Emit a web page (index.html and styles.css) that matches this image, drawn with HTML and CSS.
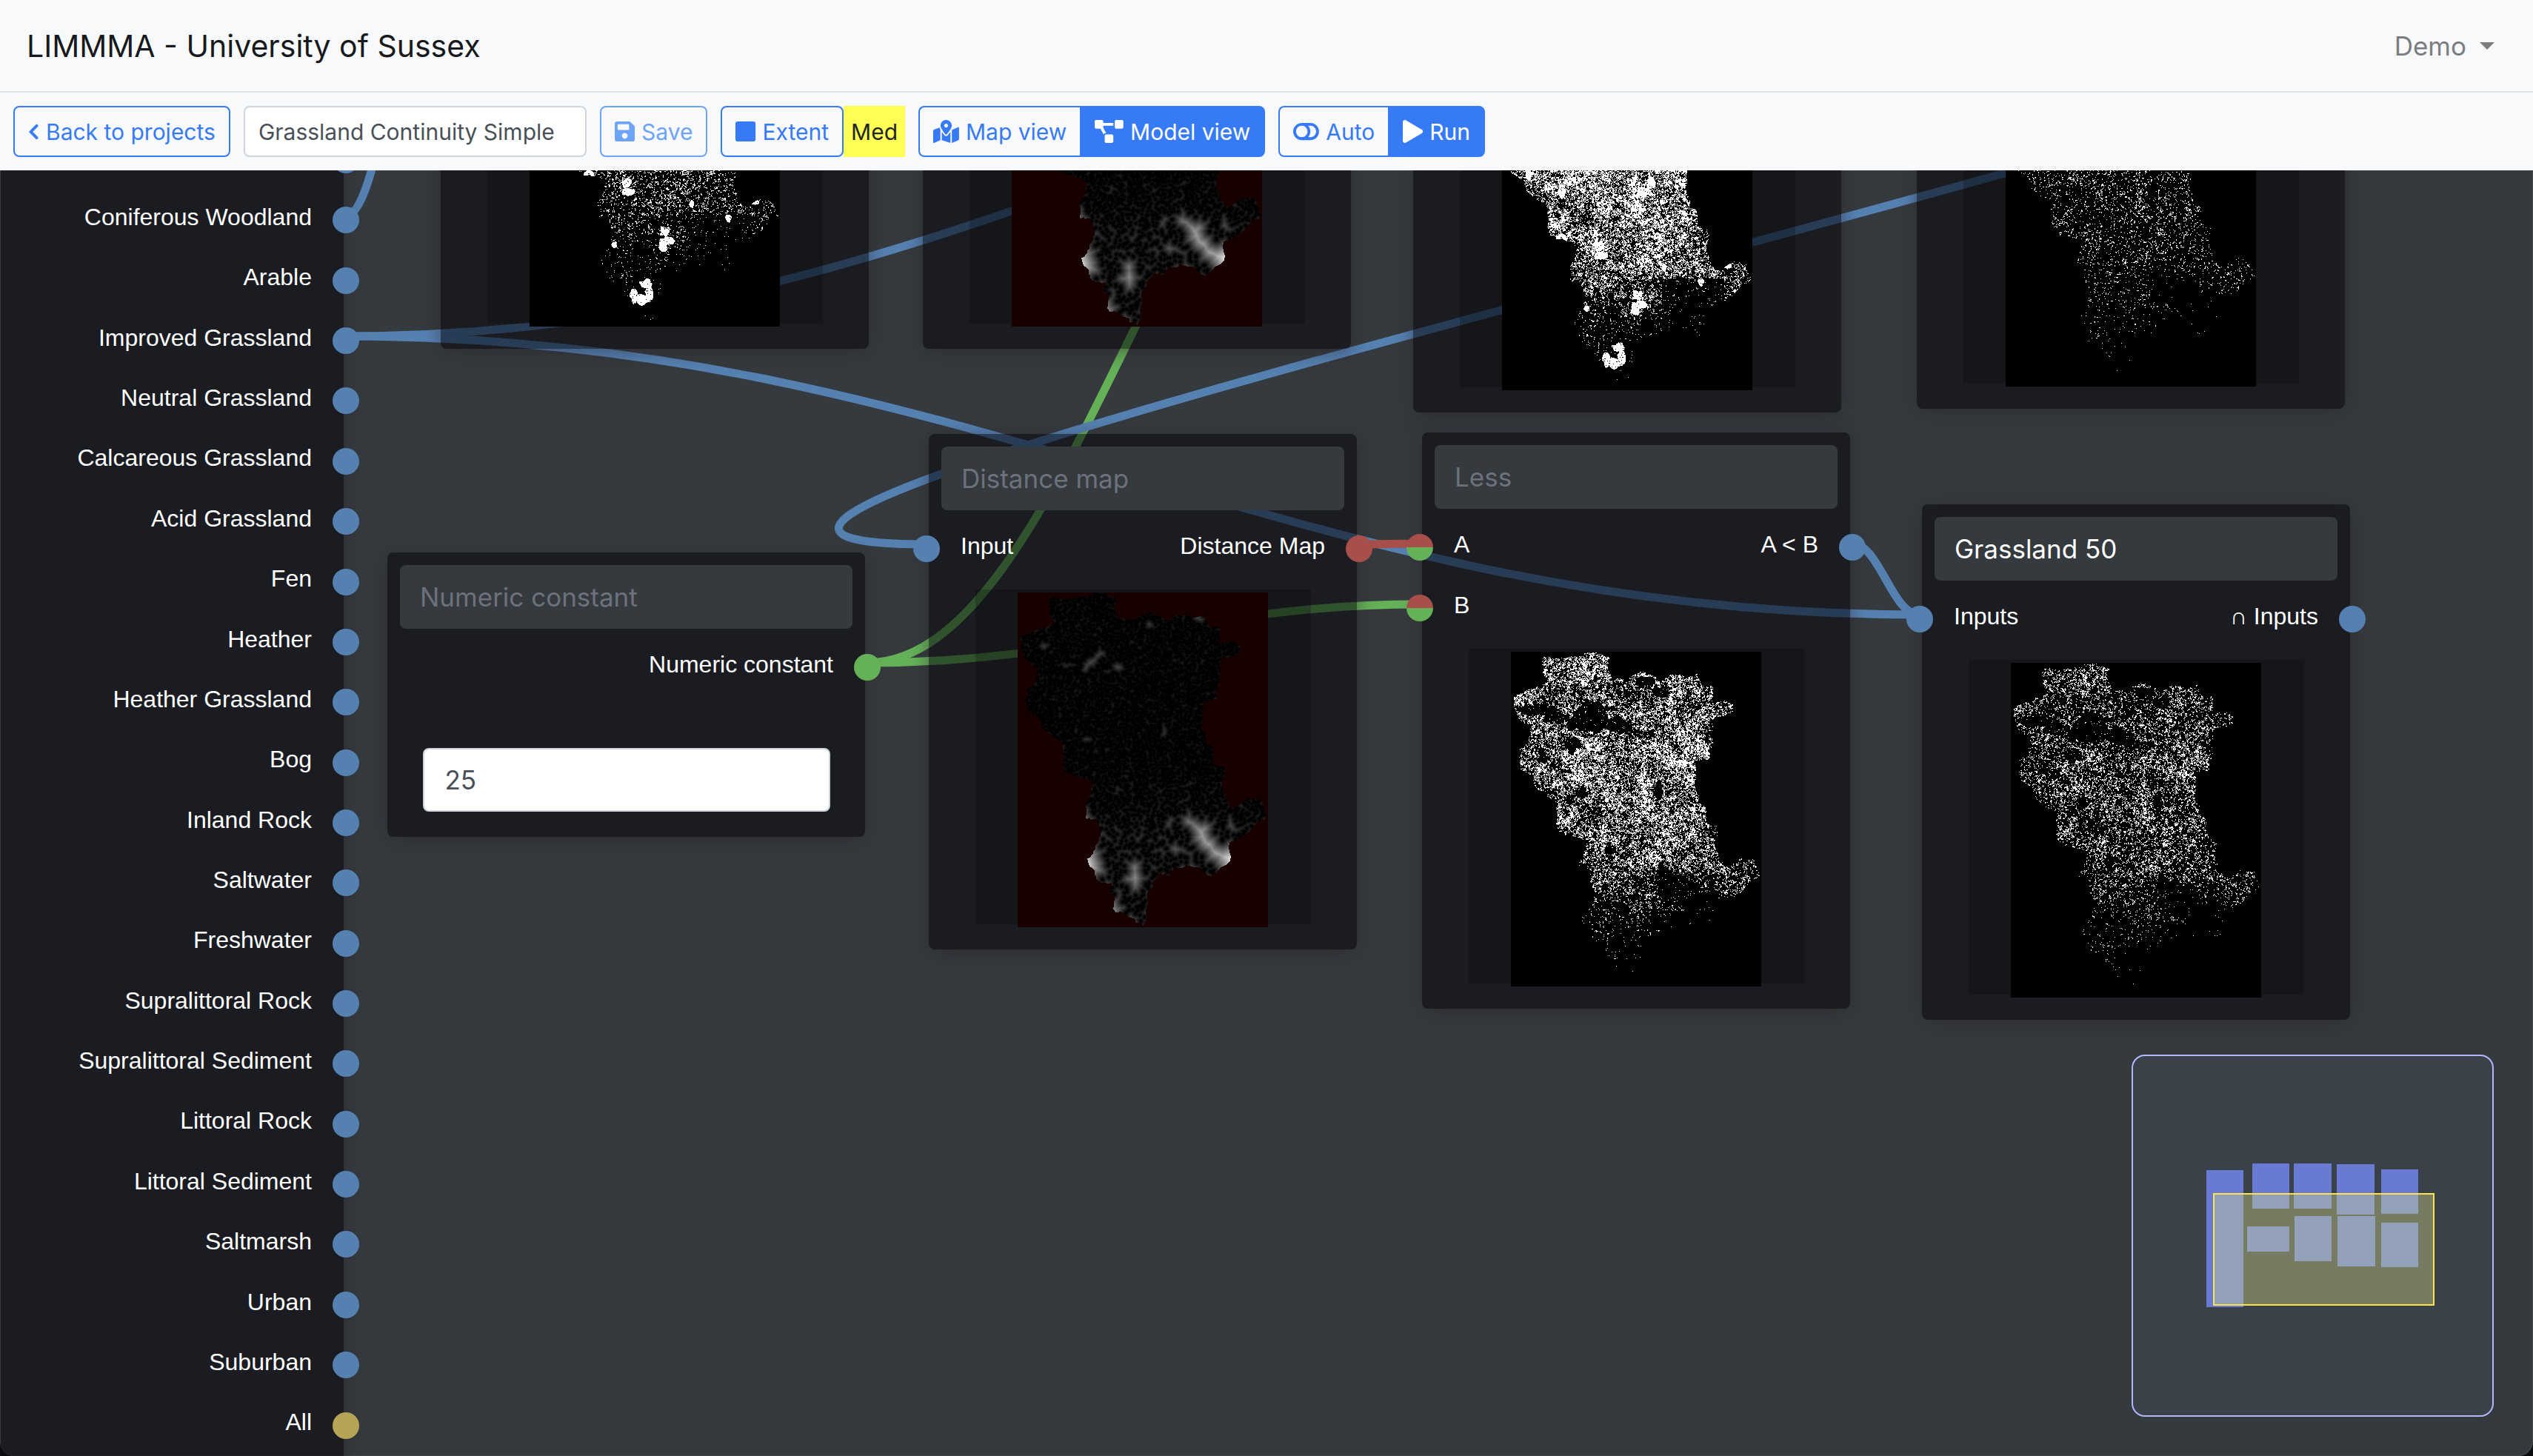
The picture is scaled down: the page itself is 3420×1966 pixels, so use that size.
FILE: index.html
```
<!DOCTYPE html>
<html lang="en">
<head>
<meta charset="utf-8">
<title>LIMMMA - University of Sussex</title>
<link rel="stylesheet" href="styles.css">
</head>
<body>
<header class="navbar">
  <a class="brand" href="#">LIMMMA - University of Sussex</a>
  <button class="user-menu" type="button">Demo <span class="caret"></span></button>
</header>

<div class="toolbar">
  <a class="btn" href="#"><svg class="icon icon-chevron" viewBox="0 0 320 512"><path d="M34.5 239L228.900 44.700c9.400-9.400 24.600-9.400 33.900 0l22.700 22.700c9.400 9.400 9.400 24.500 0 33.900L131.500 256l154 154.800c9.300 9.400 9.300 24.500 0 33.900l-22.700 22.700c-9.400 9.400-24.600 9.400-33.900 0L34.500 273c-9.400-9.400-9.400-24.600 0-34z"/></svg>Back to projects</a>
  <input class="project-name" type="text" aria-label="Project name" value="Grassland Continuity Simple">
  <button class="btn" type="button" disabled><svg class="icon icon-save" viewBox="0 0 448 512"><path d="M433.900 129.900l-83.900-83.900A48 48 0 0 0 316.100 32H48C21.500 32 0 53.500 0 80v352c0 26.500 21.500 48 48 48h352c26.500 0 48-21.500 48-48V163.900a48 48 0 0 0-14.100-34zM224 416c-35.300 0-64-28.700-64-64s28.700-64 64-64 64 28.700 64 64-28.700 64-64 64zm96-304.500V212c0 6.600-5.400 12-12 12H76c-6.600 0-12-5.400-12-12V108c0-6.600 5.400-12 12-12h228.500c3.200 0 6.200 1.300 8.500 3.500l3.500 3.500A12 12 0 0 1 320 111.500z"/></svg>Save</button>
  <div class="group">
    <button class="btn" type="button"><svg class="icon icon-square" viewBox="0 0 448 512"><path d="M400 32H48C21.500 32 0 53.500 0 80v352c0 26.500 21.500 48 48 48h352c26.500 0 48-21.500 48-48V80c0-26.500-21.500-48-48-48z"/></svg>Extent</button>
    <span class="extent-size">Med</span>
  </div>
  <div class="group">
    <button class="btn" type="button"><svg class="icon icon-map" viewBox="0 0 576 512"><path d="M288 0c-69.600 0-126 56.400-126 126 0 56.300 82.400 158.800 113.900 196 6.400 7.500 17.800 7.500 24.200 0C331.600 284.800 414 182.300 414 126 414 56.400 357.600 0 288 0zm0 168c-23.200 0-42-18.800-42-42s18.800-42 42-42 42 18.800 42 42-18.800 42-42 42zM20.100 216A32 32 0 0 0 0 245.700V496c0 11.300 11.400 19 21.900 14.900L160 448V214.900c-8.800-16-16.100-31.500-21.300-46.400L20.100 216zM288 359.700c-14.100 0-27.400-6.200-36.500-17-19.700-23.200-40.600-49.600-59.500-76.700v182l192 64V266c-18.900 27.100-39.800 53.500-59.500 76.700-9.100 10.800-22.500 17-36.500 17zm266.100-198.600L416 224v288l139.900-56A32 32 0 0 0 576 426.300V176c0-11.300-11.400-19-21.900-14.900z"/></svg>Map view</button>
    <button class="btn btn-solid" type="button"><svg class="icon icon-diagram" viewBox="0 0 640 512"><path d="M384 320H256c-17.700 0-32 14.300-32 32v128c0 17.700 14.300 32 32 32h128c17.700 0 32-14.300 32-32V352c0-17.700-14.300-32-32-32zM192 32c0-17.700-14.300-32-32-32H32C14.300 0 0 14.300 0 32v128c0 17.700 14.300 32 32 32h95.700l73.200 128C212 301 232.400 288 256 288h.3L192 175.500V128h224V64H192V32zM608 0H480c-17.700 0-32 14.300-32 32v128c0 17.700 14.300 32 32 32h128c17.700 0 32-14.300 32-32V32c0-17.700-14.300-32-32-32z"/></svg>Model view</button>
  </div>
  <div class="group">
    <button class="btn" type="button"><svg class="icon icon-toggle" viewBox="0 0 576 512"><path d="M384 64H192C86 64 0 150 0 256s86 192 192 192h192c106 0 192-86 192-192S490 64 384 64zM64 256c0-70.700 57.200-128 128-128 70.700 0 128 57.200 128 128 0 70.700-57.200 128-128 128-70.700 0-128-57.200-128-128zm320 128h-48.900c65.200-72.900 65-183.200 0-256H384c70.700 0 128 57.200 128 128 0 70.700-57.200 128-128 128z"/></svg>Auto</button>
    <button class="btn btn-solid" type="button"><svg class="icon icon-play" viewBox="0 0 448 512"><path d="M424.400 214.700L72.400 6.600C43.800-10.300 0 6.100 0 47.900V464c0 37.500 40.700 60.100 72.400 41.300l352-208c31.400-18.500 31.500-64.100 0-82.600z"/></svg>Run</button>
  </div>
</div>

<main class="editor">
  <svg class="links" aria-hidden="true">
    <path class="link-raster" d="M467 61C517 61 542 -308 592 -308"/>
    <path class="link-raster" d="M467 224C1314 224 1738 -226 2585 -226"/>
    <path class="link-number" d="M1171 665C1455 665 1605 -238 1905 -238"/>
    <path class="link-number" d="M1171 665C1469 665 1619 586 1917 586"/>
    <path class="link-raster" d="M467 224C1317 224 1741 600 2591 600"/>
    <path class="link-distance" d="M1834 505C1867 505 1884 504 1917 504"/>
    <path class="link-raster" d="M3168 -226C3965 -226 454 505 1251 505"/>
    <path class="link-raster" d="M2501 504C2537 504 2555 600 2591 600"/>
  </svg>

  <section class="node habitats">
    <ul class="habitat-list">
      <li class="io"><i class="port port-out"></i></li>
      <li class="io">Coniferous Woodland<i class="port port-out"></i></li>
      <li class="io">Arable<i class="port port-out"></i></li>
      <li class="io">Improved Grassland<i class="port port-out"></i></li>
      <li class="io">Neutral Grassland<i class="port port-out"></i></li>
      <li class="io">Calcareous Grassland<i class="port port-out"></i></li>
      <li class="io">Acid Grassland<i class="port port-out"></i></li>
      <li class="io">Fen<i class="port port-out"></i></li>
      <li class="io">Heather<i class="port port-out"></i></li>
      <li class="io">Heather Grassland<i class="port port-out"></i></li>
      <li class="io">Bog<i class="port port-out"></i></li>
      <li class="io">Inland Rock<i class="port port-out"></i></li>
      <li class="io">Saltwater<i class="port port-out"></i></li>
      <li class="io">Freshwater<i class="port port-out"></i></li>
      <li class="io">Supralittoral Rock<i class="port port-out"></i></li>
      <li class="io">Supralittoral Sediment<i class="port port-out"></i></li>
      <li class="io">Littoral Rock<i class="port port-out"></i></li>
      <li class="io">Littoral Sediment<i class="port port-out"></i></li>
      <li class="io">Saltmarsh<i class="port port-out"></i></li>
      <li class="io">Urban<i class="port port-out"></i></li>
      <li class="io">Suburban<i class="port port-out"></i></li>
      <li class="io">All<i class="port port-out port-all"></i></li>
    </ul>
  </section>

  <section class="node node-top node-a">
    <div class="preview"><canvas data-map="patches" width="338" height="452"></canvas></div>
  </section>
  <section class="node node-top node-b">
    <div class="preview"><canvas data-map="distance" width="338" height="452"></canvas></div>
  </section>
  <section class="node node-top node-c">
    <div class="preview"><canvas data-map="dense" width="338" height="452"></canvas></div>
  </section>
  <section class="node node-top node-d">
    <div class="preview"><canvas data-map="faint" width="338" height="452"></canvas></div>
  </section>

  <section class="node node-numeric">
    <input class="node-title" type="text" aria-label="Node name" placeholder="Numeric constant">
    <div class="io">Numeric constant<i class="port port-out port-number"></i></div>
    <input class="node-value" type="text" aria-label="Value" value="25">
  </section>

  <section class="node node-distance">
    <input class="node-title" type="text" aria-label="Node name" placeholder="Distance map">
    <div class="io"><span class="io-in">Input</span>Distance Map<i class="port port-in"></i><i class="port port-out port-distance"></i></div>
    <div class="preview"><canvas data-map="distance" width="338" height="452"></canvas></div>
  </section>

  <section class="node node-less">
    <input class="node-title" type="text" aria-label="Node name" placeholder="Less">
    <div class="io"><span class="io-in">A</span>A &lt; B<i class="port port-in port-mixed"></i><i class="port port-out"></i></div>
    <div class="io"><span class="io-in">B</span><i class="port port-in port-mixed"></i></div>
    <div class="preview"><canvas data-map="medium" width="338" height="452"></canvas></div>
  </section>

  <section class="node node-grassland">
    <input class="node-title" type="text" aria-label="Node name" value="Grassland 50">
    <div class="io"><span class="io-in">Inputs</span>∩ Inputs<i class="port port-in"></i><i class="port port-out"></i></div>
    <div class="preview"><canvas data-map="light" width="338" height="452"></canvas></div>
  </section>

  <svg class="minimap" viewBox="0 0 489 489" role="img" aria-label="Minimap">
    <rect class="mini-frame" x="1" y="1" width="487" height="487" rx="17"/>
    <g class="mini-nodes">
      <rect x="101" y="156" width="50" height="185"/>
      <rect x="163" y="147" width="50" height="61"/>
      <rect x="219" y="147" width="51" height="61"/>
      <rect x="277" y="148" width="51" height="68"/>
      <rect x="337" y="155" width="50" height="60"/>
      <rect x="156" y="232" width="57" height="34"/>
      <rect x="220" y="218" width="50" height="61"/>
      <rect x="278" y="218" width="51" height="68"/>
      <rect x="337" y="227" width="50" height="60"/>
    </g>
    <rect class="mini-view" x="111" y="188" width="297" height="150"/>
  </svg>
</main>
<script src="maps.js"></script>
</body>
</html>
```
FILE: styles.css
```
* {
  box-sizing: border-box;
}

body {
  margin: 0;
  min-height: 100vh;
  display: flex;
  flex-direction: column;
  background: #0c0d0f;
  font-family: Inter, "Liberation Sans", sans-serif;
  font-size: 30px;
  color: #212529;
}

button,
input {
  font: inherit;
  margin: 0;
}

/* Top bar */

.navbar {
  display: flex;
  justify-content: space-between;
  align-items: center;
  height: 125px;
  padding: 0 52px 0 36px;
  background: #f8f9fb;
  border-bottom: 2px solid #dfe2e8;
}

.brand {
  color: #17191c;
  font-size: 41px;
  text-decoration: none;
}

.user-menu {
  display: flex;
  align-items: center;
  gap: 18px;
  padding: 0;
  border: 0;
  background: none;
  color: #7c7d7e;
  font-size: 35px;
}

.caret {
  border: 10px solid transparent;
  border-top-color: currentColor;
  border-bottom: 0;
}

.toolbar {
  display: flex;
  gap: 18px;
  height: 105px;
  padding: 18px;
  background: #f8f9fb;
}

.group {
  display: flex;
}

.btn {
  display: flex;
  align-items: center;
  gap: 9px;
  height: 69px;
  padding: 0 18px;
  border: 2px solid #377af6;
  border-radius: 8px;
  background: none;
  color: #377af6;
  text-decoration: none;
  white-space: nowrap;
}

.btn:disabled {
  color: #6ea4f8;
  border-color: #6ea4f8;
}

.btn-solid {
  background: #377af6;
  color: #fff;
  border-radius: 0 8px 8px 0;
}

.btn:has(+ .btn-solid) {
  border-right: 0;
  border-radius: 8px 0 0 8px;
}

.icon {
  height: 31px;
  fill: currentColor;
}

.icon-chevron {
  height: 24px;
}

.project-name {
  width: 463px;
  height: 69px;
  padding: 0 18px;
  border: 2px solid #ced4da;
  border-radius: 8px;
  background: #fff;
  color: #495057;
}

.extent-size {
  display: flex;
  align-items: center;
  height: 69px;
  padding: 0 10px;
  background: #ffff54;
}

/* Node editor */

.editor {
  position: relative;
  flex: 1;
  overflow: hidden;
  background: #353a3e;
  border-radius: 0 0 20px 20px;
  box-shadow: inset 0 0 0 1px #43484b;
  font-family: "Liberation Sans", Arial, sans-serif;
  font-size: 32px;
  color: #fff;
}

.links {
  position: absolute;
  inset: 0;
  width: 100%;
  height: 100%;
}

.links path {
  fill: none;
  stroke-width: 11px;
}

.link-raster {
  stroke: #5581b1;
}

.link-number {
  stroke: #65b158;
}

.link-distance {
  stroke: #a84f4a;
}

.node {
  position: absolute;
  width: 578px;
  padding: 17px 17px 34px;
  border-radius: 8px;
  background: rgba(6, 4, 10, 0.55);
  box-shadow: 0 4px 24px rgba(40, 32, 42, 0.5);
}

.node-title {
  display: block;
  width: 100%;
  height: 86px;
  margin-bottom: 9px;
  padding: 0 27px;
  border: 0;
  border-radius: 8px;
  background: #353a3e;
  color: #fff;
  font-family: Inter, "Liberation Sans", sans-serif;
  font-size: 35px;
}

.node-title::placeholder {
  color: #6c717b;
  opacity: 1;
}

.io {
  position: relative;
  display: flex;
  align-items: center;
  justify-content: flex-end;
  height: 82px;
  margin: 0 -17px;
  padding: 0 43px 3px;
}

.io-in {
  margin-right: auto;
}

.port {
  position: absolute;
  top: 25px;
  width: 36px;
  height: 36px;
  border-radius: 50%;
  background: #5581b1;
}

.port-in {
  left: -21px;
}

.port-out {
  right: -21px;
}

.port-all {
  background: #b5a455;
}

.port-number {
  background: #65b158;
}

.port-distance {
  background: #a84f4a;
}

.port-mixed {
  background: linear-gradient(#a84f4a 50%, #65b158 50%);
}

.preview {
  width: 453px;
  height: 452px;
  margin: 16px auto 0;
  background: rgba(0, 0, 0, 0.2);
}

.preview canvas {
  position: relative;
  top: 4px;
  display: block;
  margin: 0 auto;
}

.node-value {
  display: block;
  width: 550px;
  height: 86px;
  margin: 70px auto 0;
  padding: 0 28px;
  border: 2px solid #ced4da;
  border-radius: 8px;
  background: #fff;
  color: #495057;
  font-family: Inter, "Liberation Sans", sans-serif;
  font-size: 35px;
}

.habitats {
  left: 1px;
  top: -57px;
  width: 463px;
  height: 1840px;
  padding: 0 17px;
}

.habitat-list {
  display: flex;
  flex-direction: column;
  height: 1790px;
  margin: 0;
  padding: 0;
  list-style: none;
}

.habitats .io {
  flex: 1;
}

.node-top {
  padding-top: 0;
}

.node-a {
  left: 595px;
  top: -261px;
}

.node-b {
  left: 1246px;
  top: -261px;
}

.node-c {
  left: 1908px;
  top: -175px;
}

.node-d {
  left: 2588px;
  top: -180px;
}

.node-numeric {
  left: 523px;
  top: 516px;
  width: 645px;
}

.node-distance {
  left: 1254px;
  top: 356px;
}

.node-less {
  left: 1920px;
  top: 354px;
}

.node-grassland {
  left: 2595px;
  top: 451px;
}

.minimap {
  position: absolute;
  right: 53px;
  bottom: 53px;
  width: 489px;
  height: 489px;
}

.mini-frame {
  fill: #3a4149;
  stroke: #b0b7fb;
  stroke-width: 2px;
}

.mini-nodes {
  fill: #687ad2;
}

.mini-view {
  fill: rgba(232, 236, 142, 0.35);
  stroke: #ffe44e;
  stroke-width: 2px;
}
```
FILE: maps.js
```
// Draws the raster previews: habitat cells inside the study area, and the
// distance of every cell to its nearest habitat.
const W = 338, H = 452;

const AREA = [43,8,74,9,113,0,134,8,131,24,139,35,160,35,182,27,204,37,219,31,234,33,252,29,256,43,273,49,
  271,69,286,66,300,71,299,82,275,88,273,123,266,132,269,143,252,147,250,170,253,203,262,208,263,231,279,236,
  276,260,284,283,290,290,312,278,329,281,337,300,316,319,286,337,287,362,261,383,249,375,227,368,210,373,
  201,382,193,378,186,387,175,410,175,439,170,451,152,439,129,427,131,413,124,406,126,392,113,392,104,382,
  94,359,102,349,110,335,113,321,106,306,93,306,91,287,104,257,87,251,65,243,60,201,54,198,34,184,28,168,
  12,158,12,132,24,121,28,102,19,97,4,74,4,59,30,50,52,41,43,29];

// Gaps and solid patches as x, y, rx, ry.
const GAPS = [[110,76,20,9],[108,94,36,14],[36,78,26,8],[62,90,18,9],[145,100,22,9],[180,40,13,7],[203,54,11,8],
  [199,187,6,11],[134,266,8,6],[97,190,7,7],[82,125,10,10],[42,141,6,8],[225,318,32,22],[262,345,34,26],
  [205,300,8,16],[240,365,40,10],[98,300,10,14]];
const GLOWS = [[232,308,15,11],[242,317,17,15],[255,333,20,18],[276,350,26,18],[284,360,26,20],[98,368,22,27],
  [157,384,16,25],[134,428,16,11],[92,297,8,12],[35,72,8,6],[110,82,9,8],[100,92,9,8],[92,103,8,7],
  [135,100,9,9],[178,43,8,6],[197,188,5,11],[93,198,8,6],[135,266,5,5],[245,38,7,5],[203,312,8,10],
  [214,345,9,7],[286,310,6,12],[66,97,14,4]];
const PATCHES = [[131,259,7,8],[134,269,9,6],[80,245,8,5],[218,285,4,6],[181,322,7,10],[185,336,10,7],
  [180,344,6,8],[268,305,4,6],[157,394,9,7],[140,406,6,10],[150,415,13,8],[161,408,6,12],[114,341,4,4],
  [304,283,7,4],[192,184,12,7],[200,172,6,9],[80,182,6,10],[36,160,5,8]];

const MAPS = {
  patches: { density: 0.26, patches: true },
  dense: { density: 0.47, patches: true },
  medium: { density: 0.42, gaps: true },
  light: { density: 0.3, gaps: true },
  faint: { density: 0.19, gaps: true }
};

function random(seed) {
  return () => {
    seed = (seed + 0x6d2b79f5) | 0;
    let t = Math.imul(seed ^ (seed >>> 15), 1 | seed);
    t = (t + Math.imul(t ^ (t >>> 7), 61 | t)) ^ t;
    return ((t ^ (t >>> 14)) >>> 0) / 4294967296;
  };
}

function noise(size, rnd) {
  const cols = Math.ceil(W / size) + 2;
  const grid = Array.from({ length: cols * (Math.ceil(H / size) + 2) }, rnd);
  return (x, y) => {
    const i = Math.floor(x / size), j = Math.floor(y / size);
    const u = x / size - i, v = y / size - j, k = j * cols + i;
    return (grid[k] * (1 - u) + grid[k + 1] * u) * (1 - v) +
      (grid[k + cols] * (1 - u) + grid[k + cols + 1] * u) * v;
  };
}

function studyArea(rnd) {
  const c = document.createElement('canvas');
  c.width = W;
  c.height = H;
  const g = c.getContext('2d');
  g.beginPath();
  for (let i = 0; i < AREA.length; i += 2) {
    const n = (i + 2) % AREA.length;
    g.lineTo(AREA[i], AREA[i + 1]);
    for (let t = 0.25; t < 1; t += 0.25) {
      g.lineTo(AREA[i] + (AREA[n] - AREA[i]) * t + rnd() * 5 - 2.5,
        AREA[i + 1] + (AREA[n + 1] - AREA[i + 1]) * t + rnd() * 5 - 2.5);
    }
  }
  g.fill();
  const data = g.getImageData(0, 0, W, H).data;
  return (x, y) => data[(y * W + x) * 4 + 3] > 127;
}

function within(list, x, y, wobble) {
  return list.some(([cx, cy, rx, ry]) =>
    ((x - cx) / rx) ** 2 + ((y - cy) / ry) ** 2 < 0.5 + wobble);
}

function habitat(map, inside, rnd) {
  const fine = noise(2, rnd), mid = noise(6, rnd), coarse = noise(22, rnd), edge = noise(4, rnd);
  const cells = new Uint8Array(W * H);
  for (let y = 0; y < H; y++) {
    for (let x = 0; x < W; x++) {
      if (!inside(x, y)) continue;
      const wobble = edge(x, y);
      let d = map.density;
      if (y > 290 && x < 290) d *= Math.max(0.05, 1 - (y - 290) / 100);
      if (y > 375 && x < 142 && y < 415) d = map.density * 0.35;
      if (y > 415) d *= 0.3;
      if (x > 292 && y > 275) d *= 0.65;
      d *= 1 + 0.25 * Math.exp(-(((y - 148) / 35) ** 2));
      if (map.gaps && within(GAPS, x, y, wobble * 1.4 - 0.2)) d *= 0.08;
      if (map.patches && x > 215 && y > 300 && x < 300) d *= 0.2;
      d *= 0.3 + 0.7 * coarse(x, y) + 0.7 * mid(x, y);
      let on = rnd() * 0.45 + fine(x, y) * 0.55 < d * 0.75 + 0.12 && d > 0.03 ? 1 : 0;
      if (d <= 0.03) on = rnd() < d * 0.5 ? 1 : 0;
      if (map.patches && within(PATCHES, x, y, wobble * 1.2 - 0.3) && rnd() > 0.04) on = 1;
      cells[y * W + x] = on;
    }
  }
  return cells;
}

function distances(inside, rnd) {
  const d = new Float32Array(W * H).fill(60);
  const edge = noise(7, rnd);
  for (let y = 0; y < H; y++) {
    for (let x = 0; x < W; x++) {
      const south = Math.min(1, Math.max(0, (y - 235) / 90));
      const sparse = 0.13 * (1 - south) + 0.035 * south;
      if (inside(x, y) && rnd() < sparse && !within(GLOWS, x, y, edge(x, y))) d[y * W + x] = 0;
    }
  }
  const relax = (k, n, cost) => { if (d[n] + cost < d[k]) d[k] = d[n] + cost; };
  for (let y = 1; y < H; y++) {
    for (let x = 1; x < W - 1; x++) {
      const k = y * W + x;
      relax(k, k - 1, 1);
      relax(k, k - W, 1);
      relax(k, k - W - 1, 1.4);
      relax(k, k - W + 1, 1.4);
    }
  }
  for (let y = H - 2; y >= 0; y--) {
    for (let x = W - 2; x > 0; x--) {
      const k = y * W + x;
      relax(k, k + 1, 1);
      relax(k, k + W, 1);
      relax(k, k + W + 1, 1.4);
      relax(k, k + W - 1, 1.4);
    }
  }
  return d;
}

for (const canvas of document.querySelectorAll('canvas[data-map]')) {
  const rnd = random(7);
  const inside = studyArea(rnd);
  const g = canvas.getContext('2d');
  const image = g.createImageData(W, H);
  const isDistance = canvas.dataset.map === 'distance';
  const values = isDistance ? distances(inside, rnd) : habitat(MAPS[canvas.dataset.map], inside, rnd);
  for (let k = 0; k < W * H; k++) {
    let r, v;
    if (isDistance && !inside(k % W, Math.floor(k / W))) {
      r = 24;
      v = 0;
    } else {
      r = v = isDistance ? Math.min(255, Math.max(0, values[k] - 1) * 8) : values[k] * 255;
    }
    image.data.set([r, v, v, 255], k * 4);
  }
  g.putImageData(image, 0, 0);
}
```
